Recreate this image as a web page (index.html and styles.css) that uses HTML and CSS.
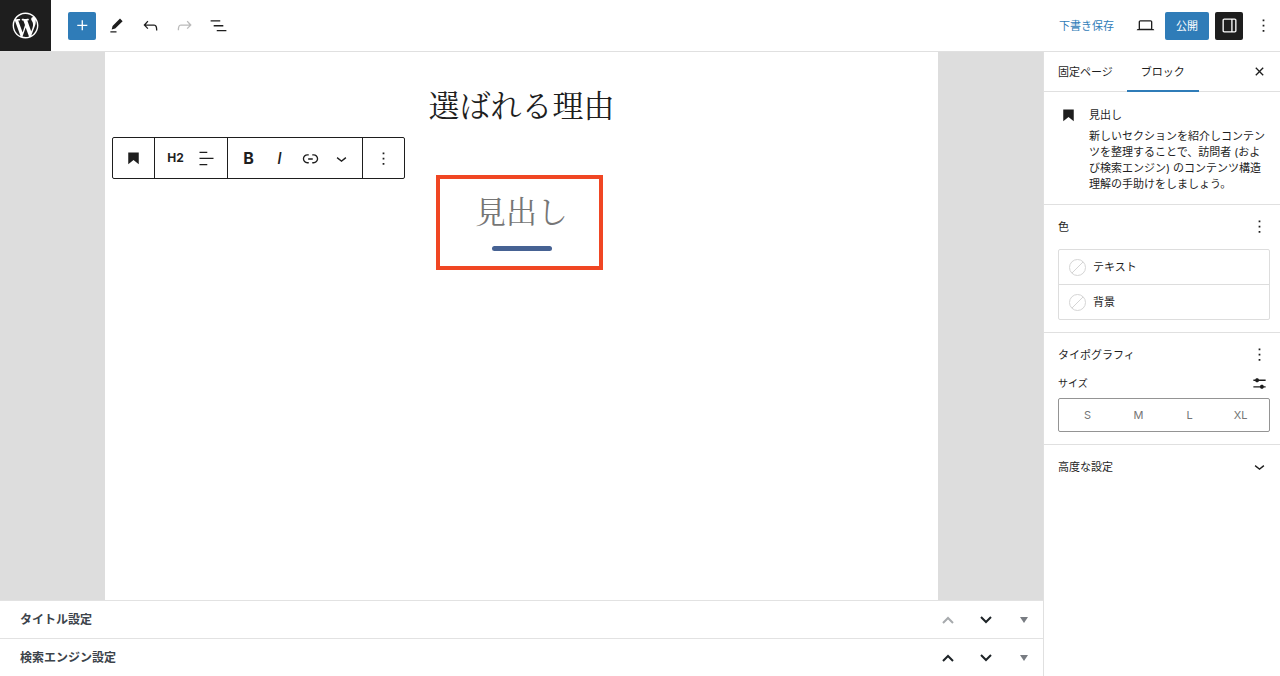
FILE: index.html
```
<!DOCTYPE html>
<html lang="ja">
<head>
    <meta charset="UTF-8">
    <meta name="viewport" content="width=device-width, initial-scale=1.0">
    <title>固定ページを編集</title>
    <link rel="stylesheet" href="styles.css">
</head>
<body>

<div class="editor">
    <!-- Top bar -->
    <header class="header">
        <a href="#" class="logo" aria-label="WordPress">
            <svg viewBox="-2 -2 24 24"><path d="M20 10c0-5.51-4.49-10-10-10C4.48 0 0 4.49 0 10c0 5.52 4.48 10 10 10 5.51 0 10-4.48 10-10zM7.78 15.37L4.37 6.22c.55-.02 1.17-.08 1.17-.08.5-.06.44-1.13-.06-1.11 0 0-1.45.11-2.37.11-.18 0-.37 0-.58-.01C4.12 2.69 6.87 1.11 10 1.11c2.33 0 4.45.87 6.05 2.34-.68-.11-1.65.39-1.65 1.58 0 .74.45 1.36.9 2.1.35.61.55 1.36.55 2.46 0 1.49-1.4 5-1.4 5l-3.03-8.37c.54-.02.82-.17.82-.17.5-.05.44-1.25-.06-1.22 0 0-1.44.12-2.38.12-.87 0-2.33-.12-2.33-.12-.5-.03-.56 1.2-.06 1.22l.92.08 1.26 3.41zM17.41 10c.24-.64.74-1.87.43-4.25.7 1.29 1.05 2.71 1.05 4.25 0 3.29-1.73 6.24-4.4 7.78.97-2.59 1.94-5.2 2.92-7.78zM6.1 18.09C3.12 16.65 1.11 13.53 1.11 10c0-1.3.23-2.48.72-3.59C3.25 10.3 4.67 14.2 6.1 18.09zm4.03-6.63l2.58 6.98c-.86.29-1.76.45-2.71.45-.79 0-1.57-.11-2.29-.33.81-2.38 1.62-4.74 2.42-7.1z"/></svg>
        </a>
        <div class="header-tools">
            <button class="icon-btn primary" aria-label="ブロックを追加">
                <svg viewBox="0 0 24 24"><path d="M11 12.5V17.5H12.5V12.5H17.5V11H12.5V6H11V11H6V12.5H11Z"/></svg>
            </button>
            <button class="icon-btn" aria-label="ツール">
                <svg viewBox="0 0 24 24"><path d="m19 7-3-3-8.5 8.5-1 4 4-1L19 7Zm-7 11.5H5V20h7v-1.5Z"/></svg>
            </button>
            <button class="icon-btn" aria-label="元に戻す">
                <svg viewBox="0 0 24 24"><path d="M18.3 11.7c-.6-.6-1.4-.9-2.3-.9H6.7l2.9-3.3-1.1-1-4.5 5L8.5 16l1-1-2.7-2.7H16c.5 0 .9.2 1.3.5 1 1 1 3.4 1 4.5v.3h1.5v-.2c0-1.5 0-4.3-1.5-5.7z"/></svg>
            </button>
            <button class="icon-btn" aria-label="やり直す" disabled>
                <svg viewBox="0 0 24 24"><path d="M15.6 6.5l-1.1 1 2.9 3.3H8c-.9 0-1.7.3-2.3.9-1.4 1.5-1.4 4.2-1.4 5.6v.2h1.5v-.3c0-1.1 0-3.5 1-4.5.3-.3.7-.5 1.3-.5h9.2L14.5 15l1.1 1.1 4.6-4.6-4.6-5z"/></svg>
            </button>
            <button class="icon-btn" aria-label="リスト表示">
                <svg viewBox="0 0 24 24"><path d="M3 6h11v1.5H3V6Zm3.5 5.5h11V13h-11v-1.5ZM21 17H10v1.5h11V17Z"/></svg>
            </button>
        </div>
        <div class="header-settings">
            <button class="draft-btn">下書き保存</button>
            <button class="icon-btn" aria-label="表示">
                <svg viewBox="0 0 24 24"><path d="M20.5 16h-.7V8c0-1.1-.9-2-2-2H6.2c-1.1 0-2 .9-2 2v8h-.7c-.8 0-1.5.7-1.5 1.5h20c0-.8-.7-1.5-1.5-1.5zM5.7 8c0-.3.2-.5.5-.5h11.6c.3 0 .5.2.5.5v7.6H5.7V8z"/></svg>
            </button>
            <button class="publish-btn">公開</button>
            <button class="icon-btn pressed" aria-label="設定">
                <svg viewBox="0 0 24 24"><path d="M18 4H6c-1.1 0-2 .9-2 2v12c0 1.1.9 2 2 2h12c1.1 0 2-.9 2-2V6c0-1.1-.9-2-2-2zm-4 14.5H6c-.3 0-.5-.2-.5-.5V6c0-.3.2-.5.5-.5h8v13zm4.5-.5c0 .3-.2.5-.5.5h-2.5v-13H18c.3 0 .5.2.5.5v12z"/></svg>
            </button>
            <button class="icon-btn" aria-label="オプション">
                <svg viewBox="0 0 24 24"><path d="M13 19h-2v-2h2v2zm0-6h-2v-2h2v2zm0-6h-2V5h2v2z"/></svg>
            </button>
        </div>
    </header>

    <div class="body">
        <main class="content">
            <div class="canvas">
                <article class="page">
                    <h1 class="page-title">選ばれる理由</h1>

                    <div class="heading-block">
                        <h2>見出し</h2>
                        <div class="highlight"></div>
                    </div>

                    <!-- Floating block toolbar -->
                    <div class="block-toolbar" role="toolbar" aria-label="ブロックツール">
                        <div class="group">
                            <button aria-label="見出し">
                                <svg viewBox="0 0 24 24"><path d="M6 5V18.5911L12 13.8473L18 18.5911V5H6Z"/></svg>
                            </button>
                        </div>
                        <div class="group">
                            <button class="level">H2</button>
                            <button aria-label="テキストの配置">
                                <svg viewBox="0 0 24 24"><path d="M4 19.8h8.9v-1.5H4v1.5zm8.9-15.6H4v1.5h8.9V4.2zm-8.9 7v1.5h16v-1.5H4z"/></svg>
                            </button>
                        </div>
                        <div class="group">
                            <button class="bold">B</button>
                            <button class="italic">I</button>
                            <button aria-label="リンク">
                                <svg viewBox="0 0 24 24"><path d="M15.6 7.2H14v1.5h1.6c2 0 3.7 1.7 3.7 3.7s-1.7 3.7-3.7 3.7H14v1.5h1.6c2.8 0 5.2-2.3 5.2-5.2 0-2.9-2.3-5.2-5.2-5.2zM4.7 12.4c0-2 1.7-3.7 3.7-3.7H10V7.2H8.4c-2.9 0-5.2 2.3-5.2 5.2 0 2.9 2.3 5.2 5.2 5.2H10v-1.5H8.4c-2 0-3.7-1.7-3.7-3.7zm4.6.9h5.3v-1.5H9.3v1.5z"/></svg>
                            </button>
                            <button aria-label="さらに表示">
                                <svg viewBox="0 0 24 24"><path d="M17.5 11.6L12 16l-5.5-4.4.9-1.2L12 14l4.5-3.6 1 1.2z"/></svg>
                            </button>
                        </div>
                        <div class="group">
                            <button aria-label="オプション">
                                <svg viewBox="0 0 24 24"><path d="M13 19h-2v-2h2v2zm0-6h-2v-2h2v2zm0-6h-2V5h2v2z"/></svg>
                            </button>
                        </div>
                    </div>
                </article>
            </div>

            <!-- Meta boxes -->
            <section class="metabox">
                <h2>タイトル設定</h2>
                <button aria-label="上に移動" disabled><svg viewBox="0 0 14 14"><path class="line" d="M2 10l5-5 5 5"/></svg></button>
                <button aria-label="下に移動"><svg viewBox="0 0 14 14"><path class="line" d="M2 4l5 5 5-5"/></svg></button>
                <button class="toggle" aria-label="パネルを切り替え"><svg viewBox="0 0 14 14"><path d="M3 4h8l-4 6z"/></svg></button>
            </section>
            <section class="metabox">
                <h2>検索エンジン設定</h2>
                <button aria-label="上に移動"><svg viewBox="0 0 14 14"><path class="line" d="M2 10l5-5 5 5"/></svg></button>
                <button aria-label="下に移動"><svg viewBox="0 0 14 14"><path class="line" d="M2 4l5 5 5-5"/></svg></button>
                <button class="toggle" aria-label="パネルを切り替え"><svg viewBox="0 0 14 14"><path d="M3 4h8l-4 6z"/></svg></button>
            </section>
        </main>

        <!-- Settings sidebar -->
        <aside class="sidebar">
            <div class="tabs">
                <button class="tab">固定ページ</button>
                <button class="tab active">ブロック</button>
                <button class="icon-btn close" aria-label="閉じる">
                    <svg viewBox="0 0 24 24"><path d="M12 13.06l3.712 3.713 1.061-1.06L13.061 12l3.712-3.712-1.06-1.06L12 10.938 8.288 7.227l-1.061 1.06L10.939 12l-3.712 3.712 1.06 1.061L12 13.061z"/></svg>
                </button>
            </div>

            <div class="block-card">
                <svg viewBox="0 0 24 24"><path d="M6 5V18.5911L12 13.8473L18 18.5911V5H6Z"/></svg>
                <div>
                    <h2>見出し</h2>
                    <p>新しいセクションを紹介しコンテンツを整理することで、訪問者 (および検索エンジン) のコンテンツ構造理解の手助けをしましょう。</p>
                </div>
            </div>

            <section class="panel">
                <div class="panel-head">
                    <h2>色</h2>
                    <button aria-label="色のオプション">
                        <svg viewBox="0 0 24 24"><path d="M13 19h-2v-2h2v2zm0-6h-2v-2h2v2zm0-6h-2V5h2v2z"/></svg>
                    </button>
                </div>
                <div class="color-list">
                    <button><span class="swatch"></span>テキスト</button>
                    <button><span class="swatch"></span>背景</button>
                </div>
            </section>

            <section class="panel">
                <div class="panel-head">
                    <h2>タイポグラフィ</h2>
                    <button aria-label="タイポグラフィのオプション">
                        <svg viewBox="0 0 24 24"><path d="M13 19h-2v-2h2v2zm0-6h-2v-2h2v2zm0-6h-2V5h2v2z"/></svg>
                    </button>
                </div>
                <div class="size-head">
                    <span id="size-label">サイズ</span>
                    <button aria-label="カスタムサイズを設定">
                        <svg viewBox="0 0 24 24"><path d="m19 7.5h-7.628c-.3089-.87389-1.1423-1.5-2.122-1.5-.97966 0-1.81309.62611-2.12197 1.5h-2.12803v1.5h2.12803c.30888.87389 1.14231 1.5 2.12197 1.5.9797 0 1.8131-.62611 2.122-1.5h7.628z"/><path d="m19 15h-2.128c-.3089-.8739-1.1423-1.5-2.122-1.5s-1.8131.6261-2.122 1.5h-7.628v1.5h7.628c.3089.8739 1.1423 1.5 2.122 1.5s1.8131-.6261 2.122-1.5h2.128z"/></svg>
                    </button>
                </div>
                <div class="sizes" role="group" aria-labelledby="size-label">
                    <button>S</button>
                    <button>M</button>
                    <button>L</button>
                    <button>XL</button>
                </div>
            </section>

            <section class="panel advanced">
                <div class="panel-head">
                    <h2>高度な設定</h2>
                    <button aria-label="高度な設定を開く">
                        <svg viewBox="0 0 24 24"><path d="M17.5 11.6L12 16l-5.5-4.4.9-1.2L12 14l4.5-3.6 1 1.2z"/></svg>
                    </button>
                </div>
            </section>
        </aside>
    </div>
</div>

</body>
</html>
```
FILE: styles.css
```
* {
    box-sizing: border-box;
}
body {
    margin: 0;
    font-family: Inter, "Noto Sans CJK JP", sans-serif;
    font-size: 11px;
    line-height: 16px;
    color: #1e1e1e;
    background-color: #fff;
}
h1, h2, p {
    margin: 0;
    font-size: inherit;
    font-weight: normal;
}
button {
    display: flex;
    justify-content: center;
    align-items: center;
    padding: 0;
    border: none;
    background: none;
    font: inherit;
    color: inherit;
    white-space: nowrap;
    cursor: pointer;
}
svg {
    display: block;
    width: 21px;
    height: 21px;
    flex-shrink: 0;
    fill: currentColor;
}
.editor {
    display: flex;
    flex-direction: column;
    height: 100vh;
}

/* Header */
.header {
    display: flex;
    align-items: center;
    border-bottom: 1px solid #e0e0e0;
}
.logo {
    display: flex;
    padding: 10px;
    background-color: #1e1e1e;
    color: #fff;
}
.logo svg {
    width: 31px;
    height: 31px;
}
.header-tools, .header-settings {
    display: flex;
    align-items: center;
    gap: 6px;
}
.header-tools {
    margin-left: 17px;
}
.header-settings {
    margin-left: auto;
    padding-right: 3px;
}
.icon-btn {
    width: 28px;
    height: 28px;
    border-radius: 2px;
}
.icon-btn:disabled {
    color: #bbb;
}
.primary, .publish-btn {
    background-color: #2f7cb8;
    color: #fff;
}
.pressed {
    background-color: #1e1e1e;
    color: #fff;
}
.draft-btn {
    padding: 0 11px;
    color: #2f7cb8;
}
.publish-btn {
    height: 28px;
    padding: 0 11px;
    border-radius: 2px;
}

/* Editor canvas */
.body {
    display: flex;
    flex: 1;
    min-height: 0;
}
.content {
    display: flex;
    flex-direction: column;
    flex: 1;
    min-width: 0;
}
.canvas {
    flex: 1;
    padding: 0 105px;
    background-color: #ddd;
}
.page {
    position: relative;
    height: 100%;
    padding-top: 28px;
    background-color: #fff;
    font-family: "Noto Serif CJK JP", "Noto Sans CJK JP", serif;
    text-align: center;
}
.page-title {
    font-size: 31px;
    line-height: 48px;
    font-weight: 400;
}
.heading-block {
    position: relative;
    width: fit-content;
    margin: 58px auto 0;
}
.heading-block h2 {
    font-size: 31px;
    line-height: 48px;
    font-weight: 400;
    color: #767676;
}
.heading-block h2::after {
    content: "";
    display: block;
    width: 60px;
    height: 5px;
    margin: 12px auto 0;
    border-radius: 3px;
    background-color: #466293;
}
.highlight {
    position: absolute;
    top: -11px;
    bottom: -19px;
    left: -39px;
    right: -35px;
    border: 4px solid #f04623;
}

.block-toolbar {
    position: absolute;
    top: 85px;
    left: 7px;
    display: flex;
    height: 42px;
    border: 1px solid #1e1e1e;
    border-radius: 2px;
    background-color: #fff;
    font-family: Inter, sans-serif;
}
.group {
    display: flex;
    padding: 0 5px;
    border-right: 1px solid #1e1e1e;
}
.group:last-child {
    border-right: none;
}
.group button {
    width: 31px;
}
.group .level {
    font-size: 12px;
    font-weight: 700;
}
.group .bold {
    font-size: 16px;
    font-weight: 700;
}
.group .italic {
    font-size: 16px;
    font-style: italic;
    font-weight: 500;
}

/* Meta boxes */
.metabox {
    display: flex;
    align-items: center;
    height: 38px;
    padding-left: 20px;
    border-top: 1px solid #e2e2e2;
    color: #1d2327;
}
.metabox h2 {
    flex: 1;
    font-size: 12px;
    font-weight: 700;
    color: #3c434a;
}
.metabox button {
    width: 38px;
    height: 36px;
}
.metabox button:disabled {
    color: #a7aaad;
}
.metabox .toggle {
    color: #787c82;
}
.metabox svg {
    width: 14px;
    height: 14px;
}
.line {
    fill: none;
    stroke: currentColor;
    stroke-width: 2;
}

/* Sidebar */
.sidebar {
    width: 237px;
    border-left: 1px solid #e0e0e0;
}
.tabs {
    display: flex;
    align-items: center;
    height: 40px;
    padding-right: 7px;
    border-bottom: 1px solid #e0e0e0;
}
.tab {
    height: 40px;
    padding: 0 14px;
}
.tab.active {
    box-shadow: inset 0 -2px #2f7cb8;
}
.close {
    margin-left: auto;
}
.block-card {
    display: flex;
    gap: 10px;
    padding: 13px 13px 12px 14px;
}
.block-card h2 {
    margin: 2px 0 5px;
}
.panel {
    padding: 8px 10px 12px 14px;
    border-top: 1px solid #e0e0e0;
}
.panel-head, .size-head {
    display: flex;
    justify-content: space-between;
    align-items: center;
}
.panel-head {
    height: 27px;
}
.color-list {
    margin-top: 9px;
    border: 1px solid #ddd;
    border-radius: 2px;
}
.color-list button {
    width: 100%;
    height: 34px;
    justify-content: flex-start;
    gap: 7px;
    padding-left: 10px;
}
.color-list button + button {
    height: 35px;
    border-top: 1px solid #ddd;
}
.swatch {
    width: 17px;
    height: 17px;
    border: 1px solid #d5d5d5;
    border-radius: 50%;
    background: linear-gradient(-45deg, transparent 48%, #d5d5d5 48%, #d5d5d5 52%, transparent 52%);
}
.size-head {
    height: 30px;
    font-size: 10px;
}
.sizes {
    display: flex;
    height: 34px;
    padding: 0 3px;
    border: 1px solid #949494;
    border-radius: 2px;
    color: #757575;
}
.sizes button {
    flex: 1;
}
```
